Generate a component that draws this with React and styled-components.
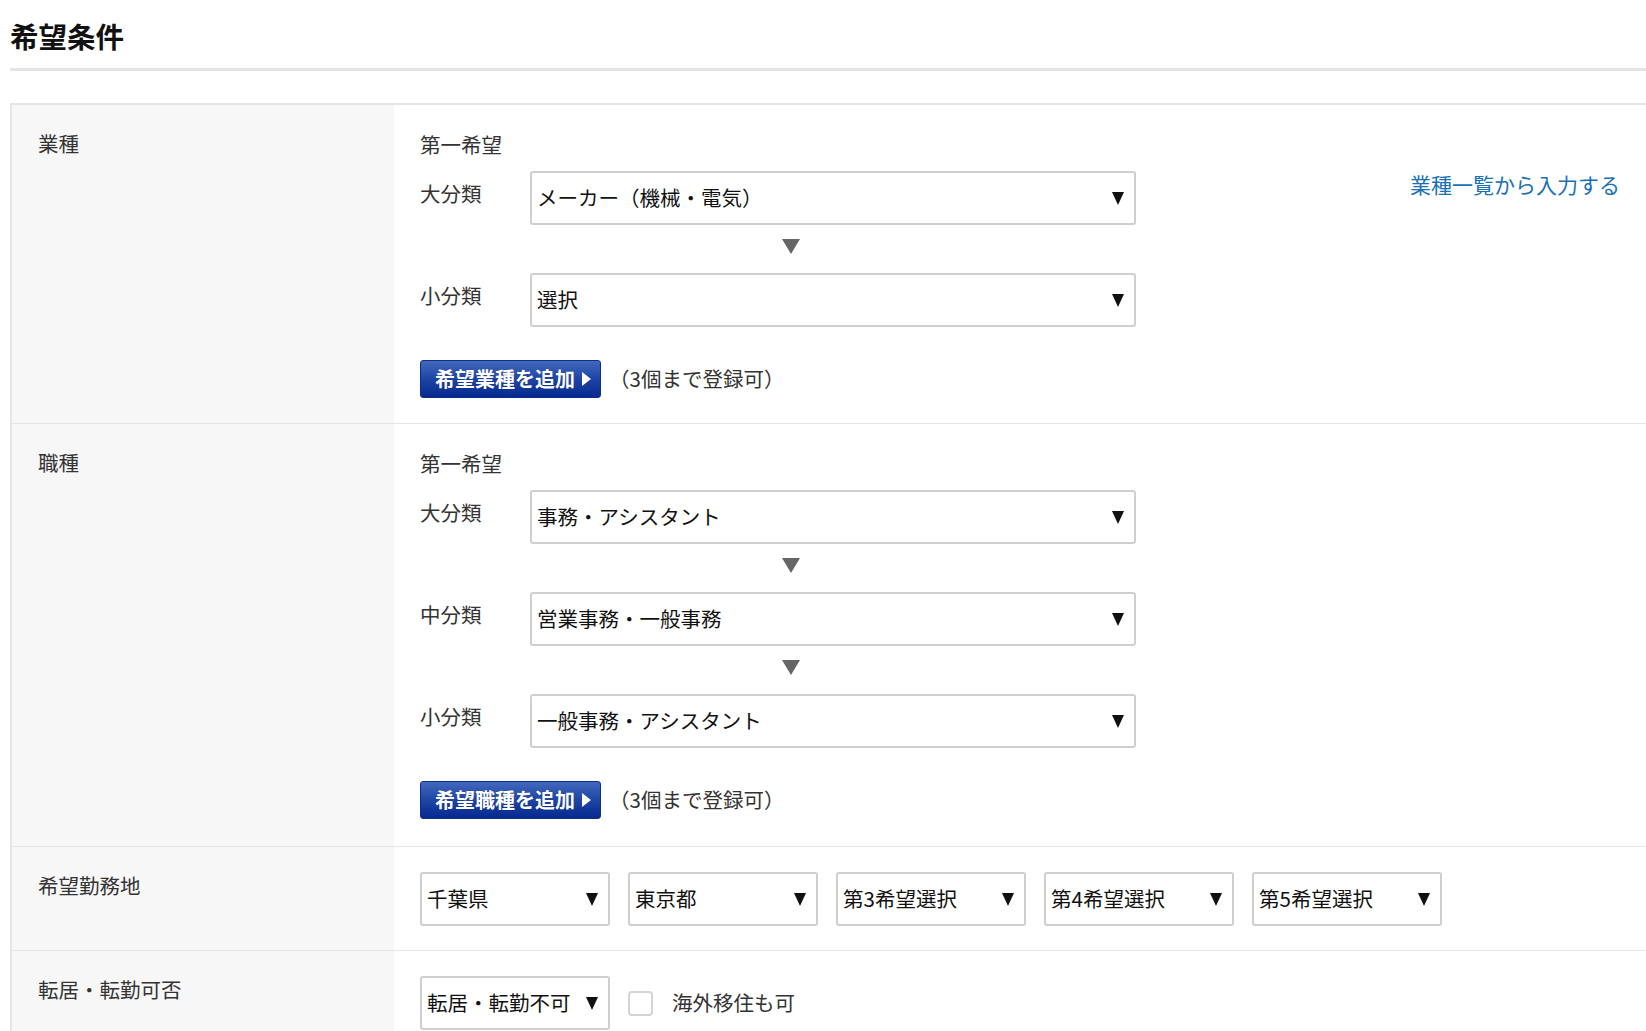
import React from 'react';
import styled, { createGlobalStyle } from 'styled-components';

const GlobalStyle = createGlobalStyle`
  body {
    margin: 0;
    background: #fff;
    font-family: "Noto Sans CJK JP", "Noto Sans", sans-serif;
    color: #333;
  }
`;

const Page = styled.div`
  padding-left: 10px;
`;

const Title = styled.h2`
  margin: 0;
  padding-top: 16px;
  padding-bottom: 12px;
  font-size: 28.5px;
  line-height: 40px;
  font-weight: 700;
  color: #111;
  border-bottom: 3px solid #e5e5e5;
`;

const Table = styled.div`
  margin-top: 32px;
  border-top: 2px solid #e5e5e5;
  border-left: 2px solid #e5e5e5;
`;

const Row = styled.div`
  display: grid;
  grid-template-columns: 382px 1fr;
  border-bottom: 1px solid #e5e5e5;
`;

const Label = styled.div`
  background: #f7f7f7;
  padding: 23px 0 0 26px;
  font-size: 20.5px;
  line-height: 30px;
  color: #333;
`;

const Content = styled.div`
  display: flex;
  justify-content: space-between;
  align-items: flex-start;
  padding: ${p => (p.$tight ? '25px 26px 24px 26px' : `24px 26px ${p.$pb || 25}px 26px`)};
`;

const Column = styled.div`
  display: flex;
  flex-direction: column;
`;

const Heading = styled.div`
  font-size: 20.5px;
  line-height: 30px;
  color: #333;
  margin-bottom: 12px;
`;

const Field = styled.div`
  display: flex;
  align-items: flex-start;
`;

const FieldName = styled.div`
  width: 110px;
  padding-top: 7px;
  font-size: 20.5px;
  line-height: 30px;
  color: #333;
`;

const Select = styled.div`
  box-sizing: border-box;
  width: ${p => p.$width || 606}px;
  height: 54px;
  display: flex;
  align-items: center;
  justify-content: space-between;
  padding: 0 10px 3px 5px;
  border: 2px solid #cfcfcf;
  border-radius: 3px;
  background: #fff;
  font-size: 20.5px;
  color: #111;
  white-space: nowrap;
`;

const Caret = styled.span`
  width: 0;
  height: 0;
  margin-top: 3px;
  border-left: 6px solid transparent;
  border-right: 6px solid transparent;
  border-top: 13px solid #111;
  flex-shrink: 0;
`;

const Step = styled.div`
  width: 742px;
  height: 48px;
  display: flex;
  justify-content: center;
  align-items: center;
`;

const StepArrow = styled.span`
  width: 0;
  height: 0;
  border-left: 9px solid transparent;
  border-right: 9px solid transparent;
  border-top: 15px solid #666;
  margin-bottom: 5px;
`;

const AddLine = styled.div`
  display: flex;
  align-items: center;
  margin-top: 33px;
`;

const AddButton = styled.button`
  box-sizing: border-box;
  width: 181px;
  height: 38px;
  display: flex;
  align-items: center;
  gap: 7px;
  padding: 0 0 2px 14px;
  border: 1px solid #0b2f8a;
  border-radius: 3px;
  background: linear-gradient(#4268bd, #1d45a5 50%, #06298f);
  color: #fff;
  font-family: inherit;
  font-size: 20px;
  font-weight: 700;
  white-space: nowrap;
  text-shadow: 0 0 1px rgba(0, 0, 0, 0.4);
  cursor: pointer;
`;

const Play = styled.span`
  width: 0;
  height: 0;
  margin-top: 2px;
  border-top: 7px solid transparent;
  border-bottom: 7px solid transparent;
  border-left: 9px solid #fff;
`;

const Note = styled.span`
  margin-left: 8px;
  padding-bottom: 2px;
  font-size: 20.5px;
  color: #333;
`;

const Link = styled.a`
  margin-top: 40px;
  font-size: 21px;
  line-height: 30px;
  color: #1a70b5;
  text-decoration: none;
  white-space: nowrap;
`;

const Inline = styled.div`
  display: flex;
  align-items: center;
  gap: 18px;
`;

const Check = styled.span`
  box-sizing: border-box;
  width: 25px;
  height: 25px;
  border: 2px solid #d4d4d4;
  border-radius: 4px;
  background: #fff;
`;

const CheckText = styled.span`
  margin-left: 1px;
  padding-bottom: 3px;
  font-size: 20.5px;
  color: #333;
`;

const Dropdown = ({ value, width }) => (
  <Select $width={width}>
    <span>{value}</span>
    <Caret />
  </Select>
);

const Chain = ({ fields }) =>
  fields.map((f, i) => (
    <React.Fragment key={f.name}>
      {i > 0 && (
        <Step>
          <StepArrow />
        </Step>
      )}
      <Field>
        <FieldName>{f.name}</FieldName>
        <Dropdown value={f.value} />
      </Field>
    </React.Fragment>
  ));

const industry = [
  { name: '大分類', value: 'メーカー（機械・電気）' },
  { name: '小分類', value: '選択' },
];

const job = [
  { name: '大分類', value: '事務・アシスタント' },
  { name: '中分類', value: '営業事務・一般事務' },
  { name: '小分類', value: '一般事務・アシスタント' },
];

const places = ['千葉県', '東京都', '第3希望選択', '第4希望選択', '第5希望選択'];

const App = () => (
  <Page>
    <GlobalStyle />
    <Title>希望条件</Title>
    <Table>
      <Row>
        <Label>業種</Label>
        <Content>
          <Column>
            <Heading>第一希望</Heading>
            <Chain fields={industry} />
            <AddLine>
              <AddButton>
                希望業種を追加
                <Play />
              </AddButton>
              <Note>（3個まで登録可）</Note>
            </AddLine>
          </Column>
          <Link href="#">業種一覧から入力する</Link>
        </Content>
      </Row>
      <Row>
        <Label>職種</Label>
        <Content $pb={27}>
          <Column>
            <Heading>第一希望</Heading>
            <Chain fields={job} />
            <AddLine>
              <AddButton>
                希望職種を追加
                <Play />
              </AddButton>
              <Note>（3個まで登録可）</Note>
            </AddLine>
          </Column>
        </Content>
      </Row>
      <Row>
        <Label>希望勤務地</Label>
        <Content $tight>
          <Inline>
            {places.map(p => (
              <Dropdown key={p} value={p} width={190} />
            ))}
          </Inline>
        </Content>
      </Row>
      <Row>
        <Label>転居・転勤可否</Label>
        <Content $tight>
          <Inline>
            <Dropdown value="転居・転勤不可" width={190} />
            <Check />
            <CheckText>海外移住も可</CheckText>
          </Inline>
        </Content>
      </Row>
    </Table>
  </Page>
);

export default App;
